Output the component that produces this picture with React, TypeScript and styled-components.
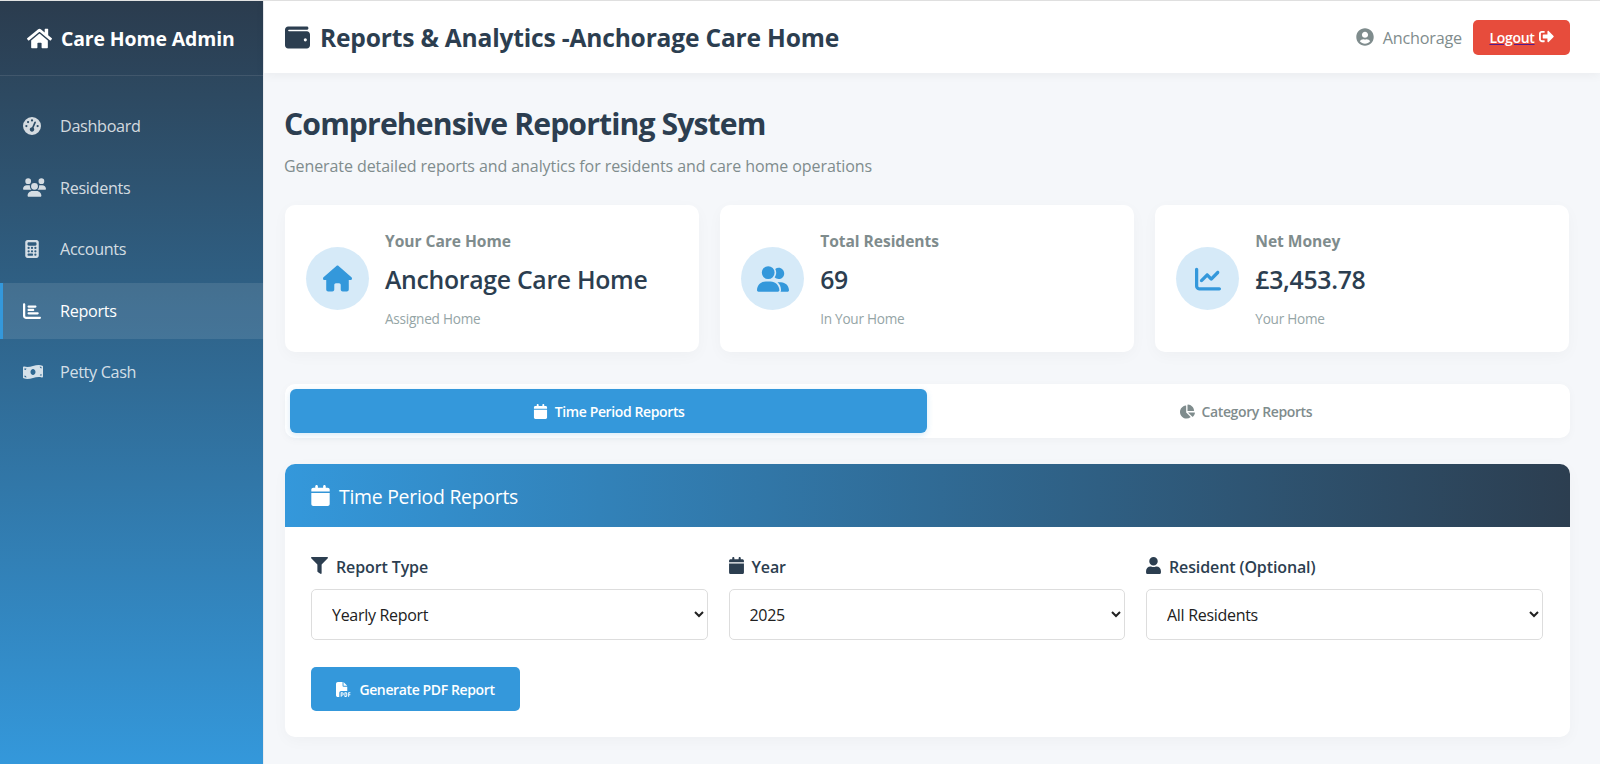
import React from "react";
import styled, { createGlobalStyle } from "styled-components";
import { FaHome, FaMoneyBillWave, FaUserCircle, FaSignOutAlt, FaChartPie, FaFilter, FaUser } from "react-icons/fa";
import {
  FaHouse,
  FaUserGroup,
  FaChartLine,
  FaChartBar,
  FaFilePdf,
  FaGaugeHigh,
  FaUsers,
  FaCalculator,
  FaWallet,
  FaCalendar,
} from "react-icons/fa6";

const Global = createGlobalStyle`
  * { box-sizing: border-box; }
  html, body { margin: 0; padding: 0; height: 100%; }
  body {
    font-family: "Open Sans", "Noto Sans", sans-serif;
    background: #f5f7fa;
    color: #2c3e50;
    overflow: hidden;
  }
`;

const Shell = styled.div`
  display: flex;
  height: 764px;
  border-top: 1px solid #e3e3e3;
`;

const Sidebar = styled.aside`
  width: 264px;
  flex: none;
  background: linear-gradient(180deg, #2c3e50 0%, #3498db 100%);
  border-right: 1px solid #e9ebee;
`;

const Brand = styled.div`
  height: 75px;
  display: flex;
  align-items: center;
  gap: 9px;
  padding-left: 27px;
  color: #fff;
  font-size: 19.4px;
  font-weight: 700;
  letter-spacing: -0.1px;
  border-bottom: 1px solid rgba(255, 255, 255, 0.1);
  background: rgba(0, 0, 0, 0.02);
  svg { font-size: 25px; flex: none; }
`;

const Nav = styled.nav`
  display: flex;
  flex-direction: column;
  gap: 5.5px;
  padding-top: 22px;
`;

const NavItem = styled.div<{ $active?: boolean }>`
  height: 56px;
  display: flex;
  align-items: center;
  padding-left: ${(p) => (p.$active ? "20px" : "23px")};
  border-left: ${(p) => (p.$active ? "3px solid #3498db" : "none")};
  background: ${(p) => (p.$active ? "rgba(255,255,255,0.1)" : "transparent")};
  color: ${(p) => (p.$active ? "#fff" : "rgba(255,255,255,0.8)")};
  font-size: 16.2px;
  letter-spacing: -0.33px;
`;

const NavIcon = styled.span<{ $size: number }>`
  width: 37px;
  flex: none;
  display: flex;
  align-items: center;
  svg { font-size: ${(p) => p.$size}px; }
`;

const Main = styled.main`
  flex: 1;
  min-width: 0;
  display: flex;
  flex-direction: column;
`;

const Header = styled.header`
  height: 72px;
  flex: none;
  background: #fff;
  display: flex;
  align-items: center;
  justify-content: space-between;
  padding: 0 30px 0 21px;
  box-shadow: 0 2px 10px rgba(0, 0, 0, 0.05);
`;

const PageTitle = styled.h1`
  margin: 0;
  display: flex;
  align-items: center;
  gap: 10px;
  font-size: 24.6px;
  font-weight: 700;
  letter-spacing: -0.2px;
  color: #2c3e50;
  svg { font-size: 25px; }
`;

const UserBox = styled.div`
  display: flex;
  align-items: center;
  color: #7f8c8d;
  font-size: 16.2px;
  letter-spacing: -0.2px;
  svg { font-size: 18px; margin-right: 9px; }
`;

const UserName = styled.span`
  padding-top: 1px;
`;

const Logout = styled.a`
  margin-left: 11px;
  height: 35px;
  width: 97px;
  display: flex;
  align-items: center;
  justify-content: center;
  background: #e74c3c;
  color: #fff;
  border-radius: 5px;
  font-size: 14px;
  font-weight: 600;
  letter-spacing: -0.3px;
  text-decoration: underline;
  text-decoration-color: #551a8b;
  svg { font-size: 15px; margin: 0 0 2px 4px; }
`;

const Content = styled.div`
  padding: 33px 30.5px 0 21px;
`;

const Heading = styled.h2`
  margin: 0 0 0 -1px;
  font-size: 30.2px;
  line-height: 36px;
  font-weight: 700;
  letter-spacing: -0.9px;
  color: #2c3e50;
`;

const Sub = styled.p`
  margin: 13px 0 0 -1px;
  font-size: 16px;
  line-height: 22px;
  letter-spacing: -0.08px;
  color: #7f8c8d;
`;

const Stats = styled.div`
  display: grid;
  grid-template-columns: repeat(3, 1fr);
  gap: 21px;
  margin-top: 28px;
`;

const StatCard = styled.div`
  height: 147px;
  background: #fff;
  border-radius: 10px;
  padding: 0 21px;
  display: flex;
  align-items: center;
  gap: 16px;
  box-shadow: 0 4px 15px rgba(0, 0, 0, 0.03);
`;

const StatIcon = styled.div`
  width: 63px;
  height: 63px;
  border-radius: 50%;
  flex: none;
  background: rgba(52, 152, 219, 0.2);
  color: #3498db;
  display: flex;
  align-items: center;
  justify-content: center;
`;

const StatGlyph = styled.span<{ $size: number }>`
  display: flex;
  svg { font-size: ${(p) => p.$size}px; }
`;

const StatBody = styled.div`
  display: flex;
  flex-direction: column;
  padding-top: 2px;
`;

const StatLabel = styled.div`
  font-size: 15.6px;
  line-height: 21px;
  font-weight: 700;
  letter-spacing: -0.05px;
  color: #7f8c8d;
`;

const StatValue = styled.div`
  margin-top: 10px;
  font-size: 24.8px;
  line-height: 34px;
  font-weight: 550;
  letter-spacing: -0.3px;
  color: #2c3e50;
`;

const StatNote = styled.div`
  margin-top: 13px;
  font-size: 13.6px;
  line-height: 19px;
  letter-spacing: -0.25px;
  color: #95a5a6;
`;

const Tabs = styled.div`
  display: flex;
  margin-top: 32px;
  height: 54px;
  padding: 5px;
  background: #fff;
  border-radius: 10px;
  box-shadow: 0 2px 10px rgba(0, 0, 0, 0.03);
`;

const Tab = styled.div<{ $active?: boolean }>`
  flex: 1;
  display: flex;
  align-items: center;
  justify-content: center;
  gap: 7px;
  border-radius: 6px;
  font-size: 14px;
  font-weight: 600;
  letter-spacing: -0.38px;
  background: ${(p) => (p.$active ? "#3498db" : "transparent")};
  color: ${(p) => (p.$active ? "#fff" : "#7f8c8d")};
  box-shadow: ${(p) => (p.$active ? "0 2px 6px rgba(52,152,219,0.2)" : "none")};
  svg { font-size: 15px; }
`;

const Panel = styled.section`
  margin-top: 26px;
  background: #fff;
  border-radius: 10px;
  box-shadow: 0 4px 15px rgba(0, 0, 0, 0.03);
  overflow: hidden;
`;

const PanelHead = styled.div`
  height: 63px;
  display: flex;
  align-items: center;
  gap: 8px;
  padding: 2px 0 0 25px;
  background: linear-gradient(90deg, #3498db 0%, #2c3e50 100%);
  color: #fff;
  font-size: 19.4px;
  letter-spacing: -0.25px;
  svg { font-size: 21px; margin-bottom: 2px; }
`;

const PanelBody = styled.div`
  padding: 27px 27px 26px 26px;
`;

const FieldGrid = styled.div`
  display: grid;
  grid-template-columns: repeat(3, 1fr);
  gap: 21px;
`;

const Field = styled.div`
  display: flex;
  flex-direction: column;
  gap: 10px;
`;

const FieldLabel = styled.label`
  display: flex;
  align-items: center;
  gap: 8px;
  height: 25px;
  font-size: 16px;
  font-weight: 600;
  letter-spacing: -0.12px;
  color: #2c3e50;
`;

const FieldGlyph = styled.span<{ $width: number }>`
  width: ${(p) => p.$width}px;
  flex: none;
  display: flex;
  justify-content: center;
  margin-bottom: 2px;
  svg { font-size: 17px; flex: none; }
`;

const Select = styled.select`
  width: 100%;
  height: 51px;
  padding: 1px 16px 0;
  border: 1px solid #ddd;
  border-radius: 5px;
  background: #fff;
  color: #212121;
  font-family: inherit;
  font-size: 16px;
  letter-spacing: -0.3px;
`;

const PdfButton = styled.button`
  margin-top: 27px;
  width: 209px;
  height: 44px;
  border: none;
  border-radius: 5px;
  background: #3498db;
  color: #fff;
  display: flex;
  align-items: center;
  justify-content: center;
  gap: 8px;
  font-family: inherit;
  font-size: 14px;
  font-weight: 600;
  letter-spacing: -0.38px;
  svg { font-size: 15px; }
`;

const navItems = [
  { label: "Dashboard", icon: <FaGaugeHigh />, size: 18 },
  { label: "Residents", icon: <FaUsers />, size: 23 },
  { label: "Accounts", icon: <FaCalculator />, size: 18 },
  { label: "Reports", icon: <FaChartBar />, size: 18, active: true },
  { label: "Petty Cash", icon: <FaMoneyBillWave />, size: 20 },
];

const stats = [
  { label: "Your Care Home", value: "Anchorage Care Home", note: "Assigned Home", icon: <FaHouse />, size: 29 },
  { label: "Total Residents", value: "69", note: "In Your Home", icon: <FaUserGroup />, size: 32 },
  { label: "Net Money", value: "£3,453.78", note: "Your Home", icon: <FaChartLine />, size: 26 },
];

const fields = [
  { label: "Report Type", value: "Yearly Report", icon: <FaFilter />, width: 17 },
  { label: "Year", value: "2025", icon: <FaCalendar />, width: 15 },
  { label: "Resident (Optional)", value: "All Residents", icon: <FaUser />, width: 15 },
];

export default function App() {
  return (
    <>
      <Global />
      <Shell>
        <Sidebar>
          <Brand>
            <FaHome />
            Care Home Admin
          </Brand>
          <Nav>
            {navItems.map((item) => (
              <NavItem key={item.label} $active={item.active}>
                <NavIcon $size={item.size}>{item.icon}</NavIcon>
                {item.label}
              </NavItem>
            ))}
          </Nav>
        </Sidebar>
        <Main>
          <Header>
            <PageTitle>
              <FaWallet />
              Reports &amp; Analytics -Anchorage Care Home
            </PageTitle>
            <UserBox>
              <FaUserCircle />
              <UserName>Anchorage</UserName>
              <Logout href="#">
                Logout
                <FaSignOutAlt />
              </Logout>
            </UserBox>
          </Header>
          <Content>
            <Heading>Comprehensive Reporting System</Heading>
            <Sub>Generate detailed reports and analytics for residents and care home operations</Sub>
            <Stats>
              {stats.map((s) => (
                <StatCard key={s.label}>
                  <StatIcon>
                    <StatGlyph $size={s.size}>{s.icon}</StatGlyph>
                  </StatIcon>
                  <StatBody>
                    <StatLabel>{s.label}</StatLabel>
                    <StatValue>{s.value}</StatValue>
                    <StatNote>{s.note}</StatNote>
                  </StatBody>
                </StatCard>
              ))}
            </Stats>
            <Tabs>
              <Tab $active>
                <FaCalendar />
                Time Period Reports
              </Tab>
              <Tab>
                <FaChartPie />
                Category Reports
              </Tab>
            </Tabs>
            <Panel>
              <PanelHead>
                <FaCalendar />
                Time Period Reports
              </PanelHead>
              <PanelBody>
                <FieldGrid>
                  {fields.map((f) => (
                    <Field key={f.label}>
                      <FieldLabel>
                        <FieldGlyph $width={f.width}>{f.icon}</FieldGlyph>
                        {f.label}
                      </FieldLabel>
                      <Select defaultValue={f.value}>
                        <option>{f.value}</option>
                      </Select>
                    </Field>
                  ))}
                </FieldGrid>
                <PdfButton>
                  <FaFilePdf />
                  Generate PDF Report
                </PdfButton>
              </PanelBody>
            </Panel>
          </Content>
        </Main>
      </Shell>
    </>
  );
}
